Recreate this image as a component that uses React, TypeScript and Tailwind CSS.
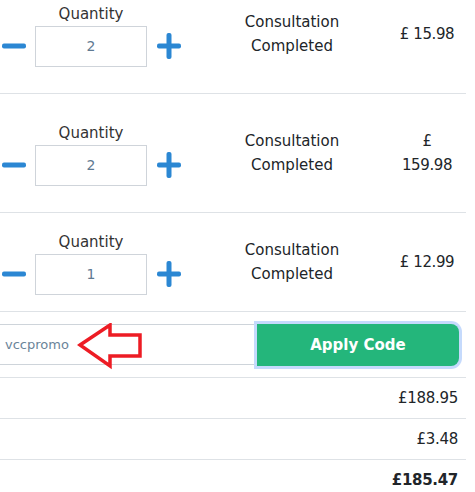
import React from "react";

const font = { fontFamily: '"DejaVu Sans", "Noto Sans", sans-serif' };

function Minus() {
  return (
    <svg width="24" height="24" viewBox="0 0 24 24" className="block">
      <rect x="0" y="9.5" width="24" height="5" rx="2" fill="#2b87d3" />
    </svg>
  );
}

function Plus() {
  return (
    <svg width="24" height="26" viewBox="0 0 24 26" className="block">
      <rect x="0" y="10.5" width="24" height="5" rx="2" fill="#2b87d3" />
      <rect x="9.5" y="0" width="5" height="26" rx="2" fill="#2b87d3" />
    </svg>
  );
}

function ItemRow({
  qty,
  price,
  height,
}: {
  qty: number;
  price: React.ReactNode;
  height: string;
}) {
  return (
    <div className={`flex items-center border-b border-[#dee2e6] ${height}`}>
      <div className="w-[196px] flex items-end">
        <div className="h-[41px] flex items-center ml-[2px]">
          <Minus />
        </div>
        <div className="flex flex-col items-center ml-[9px]">
          <div className="text-[15px] leading-[24px] text-[#333]">Quantity</div>
          <div className="w-[112px] h-[41px] border border-[#cfd4da] flex items-center justify-center text-[14px] text-[#5f7a92]">
            {qty}
          </div>
        </div>
        <div className="h-[41px] flex items-center ml-[10px]">
          <Plus />
        </div>
      </div>
      <div className="w-[192px] text-center text-[15px] leading-[24px] text-[#212529] whitespace-nowrap">
        Consultation
        <br />
        Completed
      </div>
      <div className="w-[78px] text-center text-[15px] leading-[24px] tracking-[-0.4px] text-[#212529] whitespace-nowrap">
        {price}
      </div>
    </div>
  );
}

export default function App() {
  return (
    <div className="w-[475px] h-[492px] overflow-hidden bg-white" style={font}>
      <div className="w-[466px] -mt-[25px]">
        <ItemRow qty={2} price="£ 15.98" height="h-[119px]" />
        <ItemRow
          qty={2}
          price={
            <>
              £
              <br />
              159.98
            </>
          }
          height="h-[119px]"
        />
        <ItemRow qty={1} price="£ 12.99" height="h-[99px]" />

        <div className="relative h-[66px] border-b border-[#dee2e6] flex items-start pt-[12px]">
          <div className="w-[258px] h-[41px] border-y border-[#ced4da] flex items-center pl-[5px] text-[13px] text-[#6a8499]">
            vccpromo
          </div>
          <div className="-ml-[4px] -mt-[3px] w-[208px] h-[48px] rounded-r-[11px] bg-[#c5dafc] p-[3px]">
            <button className="w-full h-full rounded-r-[8px] bg-[#24b67b] text-white font-bold text-[15px] flex items-center justify-center">
              Apply Code
            </button>
          </div>
          <svg
            className="absolute left-[77px] top-[11px]"
            width="68"
            height="48"
            viewBox="0 0 68 48"
          >
            <polygon
              points="3,22 33,2 33,12 63,12 63,33 33,33 33,43"
              fill="none"
              stroke="#ed1c24"
              strokeWidth="3.5"
              strokeLinejoin="miter"
            />
          </svg>
        </div>

        <div className="h-[41px] border-b border-[#dee2e6] flex items-center justify-end pr-[8px] text-[15px] tracking-[-0.3px] text-[#212529]">
          £188.95
        </div>
        <div className="h-[41px] border-b border-[#dee2e6] flex items-center justify-end pr-[8px] text-[15px] tracking-[-0.3px] text-[#212529]">
          £3.48
        </div>
        <div className="h-[41px] flex items-center justify-end pr-[8px] text-[15px] font-bold tracking-[-0.3px] text-[#212529]">
          £185.47
        </div>
      </div>
    </div>
  );
}
